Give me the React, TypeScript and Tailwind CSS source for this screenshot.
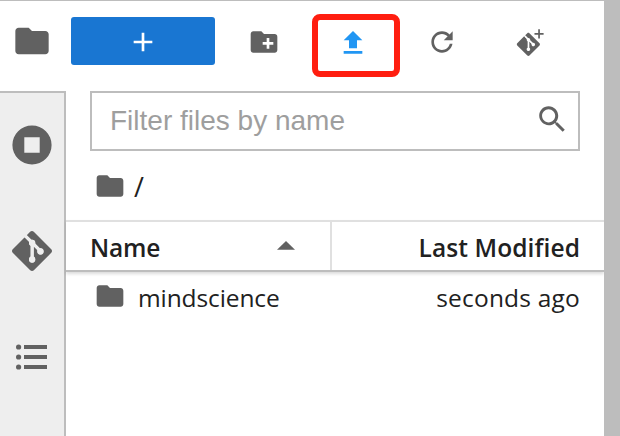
import type { ReactNode } from "react";

const FOLDER =
  "M10 4H4c-1.1 0-1.99.9-1.99 2L2 18c0 1.1.9 2 2 2h16c1.1 0 2-.9 2-2V8c0-1.1-.9-2-2-2h-8l-2-2z";
const NEW_FOLDER =
  "M20 6h-8l-2-2H4c-1.11 0-1.99.89-1.99 2L2 18c0 1.11.89 2 2 2h16c1.11 0 2-.89 2-2V8c0-1.11-.89-2-2-2zm-1 8h-3v3h-2v-3h-3v-2h3V9h2v3h3v2z";
const REFRESH =
  "M9 13.5c-2.49 0-4.5-2.01-4.5-4.5S6.51 4.5 9 4.5c1.24 0 2.36.52 3.17 1.33L10 8h5V3l-1.76 1.76C12.15 3.68 10.66 3 9 3 5.69 3 3.01 5.69 3.01 9S5.69 15 9 15c2.97 0 5.43-2.16 5.9-5h-1.52c-.46 2-2.24 3.5-4.38 3.5z";
const SEARCH =
  "M12.1,10.9h-0.7l-0.2-0.2c0.8-0.9,1.3-2.2,1.3-3.5c0-3-2.4-5.4-5.4-5.4S1.8,4.2,1.8,7.1s2.4,5.4,5.4,5.4c1.3,0,2.5-0.5,3.5-1.3l0.2,0.2v0.7l4.1,4.1l1.2-1.2L12.1,10.9z M7.1,10.9c-2.1,0-3.7-1.7-3.7-3.7s1.7-3.7,3.7-3.7s3.7,1.7,3.7,3.7S9.2,10.9,7.1,10.9z";
const GIT =
  "M23.546 10.93L13.067.452c-.604-.603-1.582-.603-2.188 0L8.708 2.627l2.76 2.76c.645-.215 1.379-.07 1.889.441.516.515.658 1.258.438 1.9l2.658 2.66c.645-.223 1.387-.078 1.9.435.721.72.721 1.884 0 2.604-.719.719-1.881.719-2.6 0-.539-.541-.674-1.337-.404-1.996L12.86 8.955v6.525c.176.086.342.203.488.348.713.721.713 1.883 0 2.6-.719.721-1.889.721-2.609 0-.719-.719-.719-1.879 0-2.598.182-.18.387-.316.605-.406V8.835c-.217-.091-.424-.222-.6-.401-.545-.545-.676-1.342-.396-2.009L7.636 3.7.45 10.881c-.6.605-.6 1.584 0 2.189l10.48 10.477c.604.604 1.582.604 2.186 0l10.43-10.43c.605-.603.605-1.582 0-2.187";

function Icon({ box = 24, className, children }: { box?: number; className: string; children: ReactNode }) {
  return (
    <svg viewBox={`0 0 ${box} ${box}`} fill="currentColor" className={`block shrink-0 ${className}`}>
      {children}
    </svg>
  );
}

function ActivityBar() {
  return (
    <nav className="flex w-[66px] shrink-0 flex-col text-[#616161]">
      <button className="flex h-[90px] items-start pl-3 pt-5">
        <Icon className="size-10"><path d={FOLDER} /></Icon>
      </button>
      <div className="flex flex-1 flex-col items-center gap-[66px] border-t-2 border-r-2 border-[#bdbdbd] bg-[#eeeeee] pt-8">
        <Icon box={40} className="size-10">
          <path fillRule="evenodd" d="M20 .4a19.6 19.6 0 1 0 0 39.2a19.6 19.6 0 0 0 0-39.2zM12.3 12.3h15.4v15.4h-15.4z" />
        </Icon>
        <Icon className="size-10">
          <path d={GIT} />
          {/* heavier branch lines and nodes */}
          <g stroke="#eeeeee" strokeWidth="2" fill="none">
            <path d="M8 2.9L12.1 7V17M12.1 7L17 11.9" />
          </g>
          <g fill="#eeeeee">
            <circle cx="12.1" cy="7.1" r="1.9" />
            <circle cx="12.1" cy="17.1" r="1.9" />
            <circle cx="17.1" cy="12.3" r="1.9" />
          </g>
        </Icon>
        <Icon box={40} className="size-10">
          <circle cx="6.6" cy="10" r="2.6" />
          <circle cx="6.6" cy="20" r="2.6" />
          <circle cx="6.6" cy="30" r="2.6" />
          <path d="M12 8h23v4H12zM12 18h23v4H12zM12 28h23v4H12z" />
        </Icon>
      </div>
    </nav>
  );
}

function Toolbar() {
  return (
    <div className="flex h-[90px] items-start pl-[5px] pt-[13px] text-[#616161]">
      <button className="mt-[3px] flex h-12 w-36 items-center justify-center rounded-[3px] bg-[#1976d2] pt-0.5 text-white">
        <Icon className="size-8"><path d="M19 13h-6v6h-2v-6H5v-2h6V5h2v6h6v2z" /></Icon>
      </button>
      <button className="ml-[33px] mt-3">
        <Icon className="size-8"><path d={NEW_FOLDER} /></Icon>
      </button>
      <button className="ml-8 flex h-[63px] w-[88px] items-center justify-center rounded-lg border-6 border-[#ff1e10] pb-1.5 pr-[6px] text-[#2196f3]">
        <Icon className="size-8"><path d="M5 20h14v-2H5v2zM5 10h4v6h6v-6h4l-7-7-7 7z" /></Icon>
      </button>
      <button className="ml-[26px] mt-3">
        <Icon box={18} className="size-8"><path d={REFRESH} /></Icon>
      </button>
      <button className="ml-14 mt-3">
        <Icon box={32} className="size-8">
          <path transform="translate(2.8 6.8) scale(.965)" d={GIT} />
          <path stroke="#fff" strokeWidth="1.3" d="M11.2 10.4L14.5 13.6V23M14.5 13.6L19.2 18.4" fill="none" />
          <path d="M20.5 7.1h3.7V3.3h1.7v3.8h3.7v1.7h-3.7v3.8h-1.7V8.8h-3.7z" />
        </Icon>
      </button>
    </div>
  );
}

export default function App() {
  return (
    <div className="flex h-[436px] w-[620px] overflow-hidden bg-white font-['Open_Sans','Noto_Sans',sans-serif] text-[#212121]">
      <div className="flex w-[604px] border-t border-[#bdbdbd]">
        <ActivityBar />
        <main className="flex min-w-0 flex-1 flex-col">
          <Toolbar />
          <div className="mx-6 flex h-[60px] items-center justify-between border-2 border-[#bdbdbd] pl-[18px] pr-[10px] font-['Liberation_Sans',sans-serif] text-[28px] text-[#9e9e9e]">
            <span className="whitespace-pre">Filter files by name</span>
            <Icon box={18} className="size-8 -translate-y-[2px] text-[#616161]"><path d={SEARCH} /></Icon>
          </div>
          <div className="flex h-[69px] items-center gap-2 pl-7 text-[27px]">
            <Icon className="size-8 text-[#616161]"><path d={FOLDER} /></Icon>
            <span className="pt-[3px]">/</span>
          </div>
          <div className="flex h-[52px] border-t-2 border-b-2 border-t-[#e0e0e0] border-b-[#bdbdbd] text-[24.5px] font-semibold shadow-[0_2px_3px_rgba(0,0,0,0.14)]">
            <div className="flex w-[266px] items-center justify-between border-r-2 border-[#e0e0e0] pl-6 pr-[35px]">
              <span className="pt-[5px] tracking-[-0.2px]">Name</span>
              <Icon box={18} className="h-[18px] w-[18px] -translate-y-[2px]">
                <path fill="#616161" d="M0 14.8L9 6L18 14.8z" />
              </Icon>
            </div>
            <div className="flex flex-1 items-center justify-end pr-6 pt-[5px] tracking-[0.1px]">Last Modified</div>
          </div>
          <div className="flex h-12 items-center pl-7 pr-6 text-[24.5px]">
            <Icon className="size-8 text-[#616161]"><path d={FOLDER} /></Icon>
            <span className="ml-3 mt-[5px] tracking-[-0.1px]">mindscience</span>
            <span className="ml-auto mt-[5px] tracking-[0.2px]">seconds ago</span>
          </div>
        </main>
      </div>
      <div className="w-4 shrink-0 bg-[#bdbdbd]" />
    </div>
  );
}
